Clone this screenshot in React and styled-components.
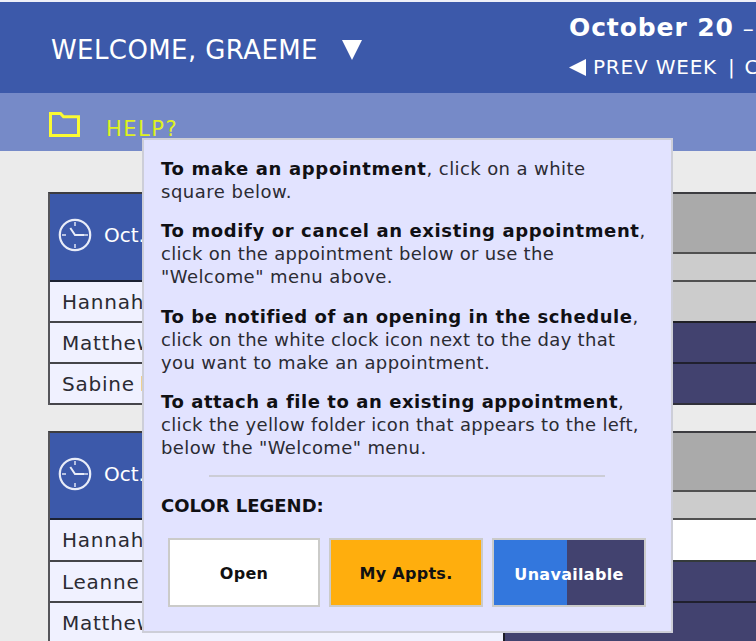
import React from 'react';
import styled, { createGlobalStyle } from 'styled-components';

const GlobalStyle = createGlobalStyle`
  *, *::before, *::after { box-sizing: border-box; }
  body {
    margin: 0;
    overflow: hidden;
    background: #ebebeb;
    color: #2b2b33;
    font-family: Verdana, "DejaVu Sans", sans-serif;
  }
`;

const Page = styled.div`
  position: relative;
  width: 756px;
  height: 641px;
  overflow: hidden;
  background: #ebebeb;
`;

const Header = styled.header`
  display: flex;
  height: 93px;
  border-top: 2px solid #eef0f8;
  background: #3c59aa;
  color: #fff;
`;

const Welcome = styled.div`
  display: flex;
  flex: none;
  align-items: center;
  gap: 24px;
  width: 569px;
  padding: 4px 0 0 51px;
  font-size: 26px;
  letter-spacing: 0.4px;
  white-space: nowrap;
`;

const WeekNav = styled.nav`
  flex: none;
  width: 187px;
  white-space: nowrap;
`;

const WeekTitle = styled.div`
  margin-top: 9px;
  line-height: 34px;
  font-size: 25px;
  letter-spacing: 0.9px;
`;

const Dash = styled.span`
  font-size: 22px;
`;

const WeekLinks = styled.div`
  display: flex;
  align-items: center;
  margin-top: 7px;
  line-height: 28px;
  font-size: 20px;
  letter-spacing: 0.8px;
`;

const PrevLink = styled.span`
  margin-left: 7px;
`;

const Divider = styled.span`
  margin: 0 9px 0 11px;
`;

const HelpBar = styled.div`
  display: flex;
  align-items: flex-start;
  height: 58px;
  padding: 19px 0 0 49px;
  background: #768ac8;
  color: #dff11e;
`;

const HelpLink = styled.span`
  margin: 4px 0 0 26px;
  line-height: 26px;
  font-size: 21px;
  letter-spacing: 1.5px;
`;

const Schedule = styled.main`
  display: flex;
  flex-direction: column;
  gap: 26px;
  padding: 41px 0 0 48px;
`;

const DayTable = styled.section`
  display: grid;
  grid-template-columns: 455px 1fr;
  border-top: 2px solid #3c3c40;
  border-left: 2px solid #55555a;
`;

const DayCell = styled.div`
  display: flex;
  align-items: center;
  gap: 12px;
  height: ${(p) => p.$height}px;
  padding: 0 0 4px 8px;
  border-bottom: 2px solid #1c2233;
  border-right: 2px solid #1c1c26;
  background: #3c59aa;
  color: #fff;
  font-size: 20px;
`;

const TimeHeader = styled.div`
  display: grid;
  grid-template-rows: ${(p) => p.$top}px 1fr;
`;

const TimeBand = styled.div`
  border-bottom: 2px solid #505050;
  background: ${(p) => p.$color};
`;

const NameCell = styled.div`
  display: flex;
  align-items: center;
  height: ${(p) => p.$height}px;
  padding: 0 0 0 12px;
  border-bottom: 2px solid #45454a;
  border-right: 2px solid #1c1c26;
  background: #f0f1ff;
  font-size: 20px;
  letter-spacing: 0.75px;
`;

const NameFlag = styled.span`
  width: 5px;
  height: 15px;
  margin-left: 6px;
  background: #f0d090;
`;

const SlotCell = styled.div`
  border-bottom: 2px solid ${(p) => p.$line};
  background: ${(p) => p.$color};
`;

const HelpPopup = styled.aside`
  position: absolute;
  left: 142px;
  top: 138px;
  width: 531px;
  height: 495px;
  padding: 17px 0 0 17px;
  border: 2px solid #cdced8;
  background: #e2e3ff;
  font-size: 18px;
  line-height: 23px;
`;

const Tip = styled.p`
  margin: 0 0 ${(p) => p.$gap}px;
`;

const TipLine = styled.span`
  display: block;
  white-space: nowrap;
  letter-spacing: ${(p) => p.$spacing}px;
`;

const Lead = styled.strong`
  color: #101014;
  letter-spacing: ${(p) => p.$spacing}px;
`;

const Rule = styled.hr`
  width: 396px;
  height: 2px;
  margin: 0 0 0 48px;
  border: 0;
  background: #cccdd6;
`;

const LegendTitle = styled.h2`
  margin: 17px 0 21px;
  color: #101014;
  font-size: 18px;
  line-height: 23px;
`;

const Legend = styled.div`
  display: flex;
  gap: 9px;
  margin-left: 7px;
`;

const Swatch = styled.div`
  display: flex;
  align-items: center;
  justify-content: center;
  width: ${(p) => p.$width}px;
  height: 69px;
  padding-top: ${(p) => p.$drop || 1}px;
  border: 2px solid #cbcbc9;
  background: ${(p) => p.$fill};
  background-origin: border-box;
  color: ${(p) => p.$ink || '#111'};
  font-size: 16px;
  font-weight: bold;
  letter-spacing: 0.3px;
`;

const Icon = styled.svg`
  display: block;
  flex: none;
`;

const DownArrow = () => (
  <Icon width="20" height="20" viewBox="0 0 20 20"><path d="M0 0H20L10 20Z" fill="#fff" /></Icon>
);

const LeftArrow = () => (
  <Icon width="17" height="17" viewBox="0 0 17 17"><path d="M17 0V17L0 8.5Z" fill="#fff" /></Icon>
);

const FolderIcon = () => (
  <Icon width="31" height="25" viewBox="0 0 31 25" fill="none" stroke="#fbfb32" strokeWidth="3">
    <path d="M1.5 23.5V1.5H11.5L14.5 4.7H29.5V23.5Z" />
  </Icon>
);

const ClockIcon = () => (
  <Icon width="34" height="34" viewBox="0 0 34 34" fill="none" stroke="#e8ecf8">
    <circle cx="17" cy="17" r="15.2" strokeWidth="2.2" />
    <path d="M17 4V8M17 26V30M4 17H8M26 17H30" strokeWidth="2" opacity=".7" />
    <path d="M12.3 10L17 17H26" strokeWidth="2" />
  </Icon>
);

const NAVY = '#42426f';

const days = [
  {
    height: 88, band: 60,
    rows: [
      { name: 'Hannah', height: 41, color: '#ccc', line: '#202026' },
      { name: 'Matthew', height: 41, color: NAVY, line: '#20202e' },
      { name: 'Sabine', height: 41, color: NAVY, line: '#30303a', flag: true },
    ],
  },
  {
    height: 87, band: 59,
    rows: [
      { name: 'Hannah', height: 42, color: '#fff', line: '#343a3a' },
      { name: 'Leanne', height: 41, color: NAVY, line: '#20202e' },
      { name: 'Matthew', height: 41, color: NAVY, line: '#20202e' },
    ],
  },
];

const tips = [
  { gap: 16, lead: 'To make an appointment', ls: 0.67, rest: [['click on a white', 0.4], ['square below.', 0.5]] },
  { gap: 17, lead: 'To modify or cancel an existing appointment', ls: 0.62, rest: [null, ['click on the appointment below or use the', 0.3], ['"Welcome" menu above.', 0.44]] },
  { gap: 16, lead: 'To be notified of an opening in the schedule', ls: 0.56, rest: [null, ['click on the white clock icon next to the day that', 0.3], ['you want to make an appointment.', 0.38]] },
  { gap: 16, lead: 'To attach a file to an existing appointment', ls: 0.56, rest: [null, ['click the yellow folder icon that appears to the left,', 0.33], ['below the "Welcome" menu.', 0.38]] },
];

export default function App() {
  return (
    <Page>
      <GlobalStyle />
      <Header>
        <Welcome>WELCOME, GRAEME <DownArrow /></Welcome>
        <WeekNav>
          <WeekTitle><b>October 20</b> <Dash>–</Dash></WeekTitle>
          <WeekLinks>
            <LeftArrow />
            <PrevLink>PREV WEEK</PrevLink>
            <Divider>|</Divider>
            <span>C</span>
          </WeekLinks>
        </WeekNav>
      </Header>
      <HelpBar>
        <FolderIcon />
        <HelpLink>HELP?</HelpLink>
      </HelpBar>
      <Schedule>
        {days.map((day, i) => (
          <DayTable key={i}>
            <DayCell $height={day.height}><ClockIcon />Oct.</DayCell>
            <TimeHeader $top={day.band}>
              <TimeBand $color="#aaa" />
              <TimeBand $color="#ccc" />
            </TimeHeader>
            {day.rows.map((row) => (
              <React.Fragment key={row.name}>
                <NameCell $height={row.height}>{row.name}{row.flag && <NameFlag />}</NameCell>
                <SlotCell $color={row.color} $line={row.line} />
              </React.Fragment>
            ))}
          </DayTable>
        ))}
      </Schedule>
      <HelpPopup>
        {tips.map(({ gap, lead, ls, rest: [first, ...others] }) => (
          <Tip key={lead} $gap={gap}>
            <TipLine $spacing={first ? first[1] : 0}>
              <Lead $spacing={ls}>{lead}</Lead>,{first && ` ${first[0]}`}
            </TipLine>
            {others.map(([text, spacing]) => (
              <TipLine key={text} $spacing={spacing}>{text}</TipLine>
            ))}
          </Tip>
        ))}
        <Rule />
        <LegendTitle>COLOR LEGEND:</LegendTitle>
        <Legend>
          <Swatch $width={152} $fill="#fff">Open</Swatch>
          <Swatch $width={154} $fill="#ffae0d">My Appts.</Swatch>
          <Swatch $width={154} $drop={4} $ink="#fff" $fill={`linear-gradient(to right, #3377dd 75px, ${NAVY} 75px)`}>Unavailable</Swatch>
        </Legend>
      </HelpPopup>
    </Page>
  );
}
